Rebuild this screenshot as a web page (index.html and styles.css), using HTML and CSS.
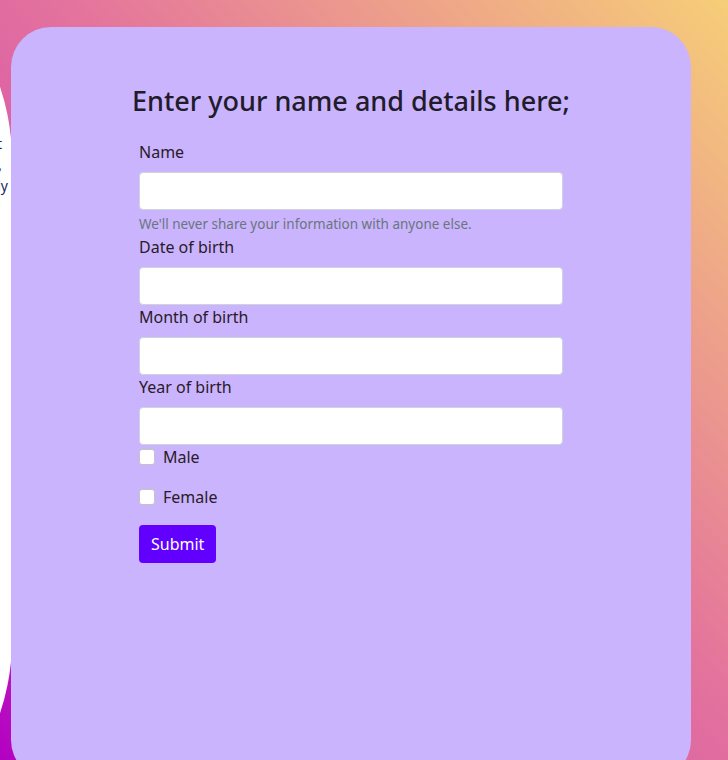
FILE: index.html
```html
<!DOCTYPE html>
<html lang="en">
<head>
<meta charset="utf-8">
<title>Details form</title>
<link rel="stylesheet" href="styles.css">
</head>
<body>
<div class="page">
  <aside class="side">
    <div class="side-line l1">Welcome to our small project about it</div>
    <div class="side-line l2">where you can read, write,</div>
    <div class="side-line l3">and share your story easily</div>
  </aside>
  <main class="card">
    <h1 class="title">Enter your name and details here;</h1>
    <form class="form">
      <div class="group">
        <label class="label" for="name">Name</label>
        <input class="input" id="name" type="text">
        <div class="help">We'll never share your information with anyone else.</div>
      </div>
      <div class="group">
        <label class="label" for="dob">Date of birth</label>
        <input class="input" id="dob" type="text">
      </div>
      <div class="group">
        <label class="label" for="mob">Month of birth</label>
        <input class="input" id="mob" type="text">
      </div>
      <div class="group">
        <label class="label" for="yob">Year of birth</label>
        <input class="input" id="yob" type="text">
      </div>
      <div class="check">
        <input class="box" id="male" type="checkbox">
        <label class="check-label" for="male">Male</label>
      </div>
      <div class="check">
        <input class="box" id="female" type="checkbox">
        <label class="check-label" for="female">Female</label>
      </div>
      <button class="btn" type="button">Submit</button>
    </form>
  </main>
</div>
</body>
</html>
```
FILE: styles.css
```css
* { box-sizing: border-box; }
html, body { margin: 0; padding: 0; }
body {
  font-family: "Noto Sans", "DejaVu Sans", sans-serif;
  color: #212529;
}
.page {
  position: relative;
  height: 760px;
  overflow: hidden;
  padding: 27px 0 0 11px;
  background: linear-gradient(to bottom left, #f6ce78 0%, #e4749c 45%, #d24cb0 75%, #b300c2 100%);
}
.side {
  position: absolute;
  left: -488px;
  top: -70px;
  width: 500px;
  height: 940px;
  background: #fff;
  border-radius: 230px;
  padding-top: 203px;
  font-size: 14px;
  line-height: 21px;
  color: #1d2a5a;
  text-align: right;
}
.side-line { white-space: nowrap; }
.l1 { padding-right: 10px; }
.l2 { padding-right: 10px; }
.l3 { padding-right: 4px; }
.card {
  position: relative;
  width: 680px;
  height: 753px;
  background: #c9b4fd;
  border-radius: 40px;
  padding-top: 58px;
  display: flex;
  flex-direction: column;
  align-items: center;
}
.title {
  margin: 0 0 23px;
  font-size: 27px;
  font-weight: 500;
  line-height: 32px;
  color: #211b2b;
}
.form { width: 424px; }
.label {
  display: block;
  font-size: 16px;
  line-height: 24px;
  margin-bottom: 8px;
  color: #2a1a2a;
}
.input {
  display: block;
  width: 100%;
  height: 38px;
  border: 1px solid #ced4da;
  border-radius: 4px;
  background: #fff;
  margin: 0;
}
.help {
  margin-top: 4px;
  font-size: 13.5px;
  line-height: 21px;
  color: #6c757d;
}
.check {
  display: flex;
  align-items: center;
  height: 24px;
  margin-bottom: 16px;
}
.box {
  appearance: none;
  width: 16px;
  height: 16px;
  margin: 0 8px 0 0;
  border: 1px solid #c4c4c4;
  border-radius: 3px;
  background: #fff;
}
.check-label {
  font-size: 16px;
  line-height: 24px;
  color: #2a1a2a;
}
.btn {
  height: 38px;
  padding: 0 12px;
  border: 0;
  border-radius: 4px;
  background: #6200ff;
  color: #fff;
  font-family: inherit;
  font-size: 16px;
}
```
